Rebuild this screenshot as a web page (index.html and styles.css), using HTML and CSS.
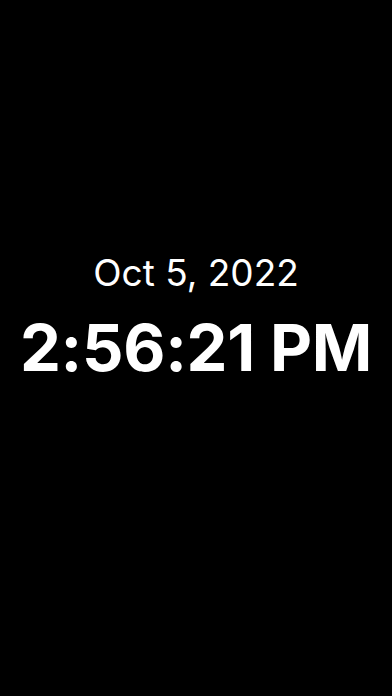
FILE: index.html
```html
<!DOCTYPE html>
<html>
<head>
<meta charset="utf-8">
<link rel="stylesheet" href="styles.css">
</head>
<body>
<main class="screen">
  <div class="clock">
    <div class="date">Oct 5, 2022</div>
    <div class="time">2:56:21 PM</div>
  </div>
</main>
</body>
</html>
```

FILE: styles.css
```css
html, body {
  margin: 0;
  padding: 0;
  background: #000;
}
.screen {
  width: 392px;
  height: 696px;
  background: #000;
  color: #fff;
  font-family: Inter, "Noto Sans", sans-serif;
  display: flex;
  flex-direction: column;
  align-items: center;
  padding-top: 249px;
  box-sizing: border-box;
}
.clock {
  display: flex;
  flex-direction: column;
  align-items: center;
}
.date {
  font-size: 37px;
  font-weight: 400;
  line-height: 48px;
}
.time {
  font-size: 65px;
  font-weight: 700;
  line-height: 72px;
  letter-spacing: -0.3px;
  margin-top: 15px;
}
```
